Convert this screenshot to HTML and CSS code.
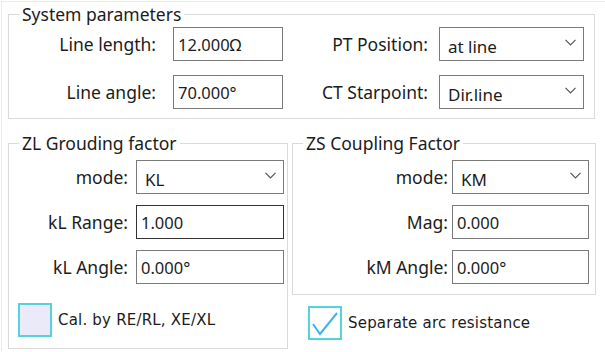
FILE: index.html
```html
<!DOCTYPE html>
<html lang="en">
<head>
<meta charset="UTF-8" />
<title>Line settings</title>
<link rel="stylesheet" href="styles.css">
</head>
<body>
  <div class="panel">
    <fieldset class="group group-system">
      <legend>System parameters</legend>
      <div class="system-grid">
        <label class="lbl lbl-a">Line length:</label>
        <div class="field">12.000Ω</div>
        <label class="lbl lbl-b">PT Position:</label>
        <div class="select"><span>at line</span><svg class="chev" width="11" height="7" viewBox="0 0 11 7"><path d="M0.5 0.8 L5.5 5.8 L10.5 0.8" fill="none" stroke="#555" stroke-width="1.2"/></svg></div>

        <label class="lbl lbl-a">Line angle:</label>
        <div class="field">70.000°</div>
        <label class="lbl lbl-b">CT Starpoint:</label>
        <div class="select"><span>Dir.line</span><svg class="chev" width="11" height="7" viewBox="0 0 11 7"><path d="M0.5 0.8 L5.5 5.8 L10.5 0.8" fill="none" stroke="#555" stroke-width="1.2"/></svg></div>
      </div>
    </fieldset>

    <div class="lower">
      <fieldset class="group group-zl">
        <legend>ZL Grouding factor</legend>
        <div class="factor-grid">
          <label class="lbl">mode:</label>
          <div class="select"><span>KL</span><svg class="chev" width="11" height="7" viewBox="0 0 11 7"><path d="M0.5 0.8 L5.5 5.8 L10.5 0.8" fill="none" stroke="#555" stroke-width="1.2"/></svg></div>
          <label class="lbl">kL Range:</label>
          <div class="field focused">1.000</div>
          <label class="lbl">kL Angle:</label>
          <div class="field">0.000°</div>
        </div>
        <div class="check-row check-zl">
          <span class="box"></span>
          <span class="check-text">Cal. by RE/RL, XE/XL</span>
        </div>
      </fieldset>

      <div class="right-col">
        <fieldset class="group group-zs">
          <legend>ZS Coupling Factor</legend>
          <div class="factor-grid">
            <label class="lbl">mode:</label>
            <div class="select"><span>KM</span><svg class="chev" width="11" height="7" viewBox="0 0 11 7"><path d="M0.5 0.8 L5.5 5.8 L10.5 0.8" fill="none" stroke="#555" stroke-width="1.2"/></svg></div>
            <label class="lbl">Mag:</label>
            <div class="field">0.000</div>
            <label class="lbl">kM Angle:</label>
            <div class="field">0.000°</div>
          </div>
        </fieldset>
        <div class="check-row check-zs">
          <span class="box checked"><svg width="30" height="30" viewBox="0 0 30 30"><path d="M3 16 L10 26 L27 5" fill="none" stroke="#40b2f0" stroke-width="2"/></svg></span>
          <span class="check-text">Separate arc resistance</span>
        </div>
      </div>
    </div>
  </div>
</body>
</html>
```

FILE: styles.css
```css
body {
  margin: 0;
  background: #fff;
  font-family: "Noto Sans", "Open Sans", sans-serif;
  font-size: 17.5px;
  color: #1c1c1c;
}

.panel {
  margin: 1px 0 0 1px;
  border-top: 1px solid #ebebeb;
  border-left: 1px solid #ebebeb;
  height: 350px;
  box-sizing: border-box;
}

.group {
  margin: 0;
  padding: 0;
  min-width: 0;
  border: 1px solid #dadada;
}

.group legend {
  margin-left: 10px;
  padding: 0 3px;
  height: 20px;
  line-height: 20px;
}

.group-system {
  margin: 2px 10px 0 6px;
  padding: 3px 0 9px;
}

.system-grid {
  display: grid;
  grid-template-columns: 164px 110px 156px 145px;
  grid-auto-rows: 34px;
  row-gap: 14px;
}

.lbl {
  display: flex;
  align-items: center;
  justify-content: flex-end;
  white-space: nowrap;
}

.lbl-a { padding-right: 17px; }
.lbl-b { padding-right: 11px; }

.field {
  border: 1px solid #7a7a7a;
  display: flex;
  align-items: center;
  padding-left: 4px;
  font-size: 16.5px;
}

.field.focused {
  border-color: #333;
}

.select {
  border: 1px solid #7a7a7a;
  display: flex;
  align-items: center;
  justify-content: space-between;
  padding: 4px 7px 0 8px;
  font-size: 17px;
}

.chev {
  margin-top: -7px;
}

.lower {
  display: grid;
  grid-template-columns: 280px 304px;
  column-gap: 4px;
  margin: 14px 0 0 6px;
  align-items: start;
}

.group-zl {
  padding: 7px 4px 11px 0;
}

.group-zs {
  padding: 7px 7px 10px 0;
}

.factor-grid {
  display: grid;
  grid-auto-rows: 34px;
  row-gap: 11px;
}

.group-zl .factor-grid {
  grid-template-columns: 127px 148px;
}

.group-zs .factor-grid {
  grid-template-columns: 159px 137px;
}

.group-zl .lbl { padding-right: 8px; }
.group-zs .lbl { padding-right: 4px; }

.check-row {
  display: flex;
  align-items: center;
  gap: 6px;
}

.check-zl {
  margin: 19px 0 0 9px;
}

.check-zs {
  margin: 11px 0 0 16px;
}

.box {
  width: 30px;
  height: 30px;
  border: 2px solid #55d3da;
  background: #eaeaf8;
  display: flex;
}

.box.checked {
  background: #fff;
}

.check-text {
  font-family: "DejaVu Sans", sans-serif;
  font-size: 15px;
  letter-spacing: 0.2px;
}
```
